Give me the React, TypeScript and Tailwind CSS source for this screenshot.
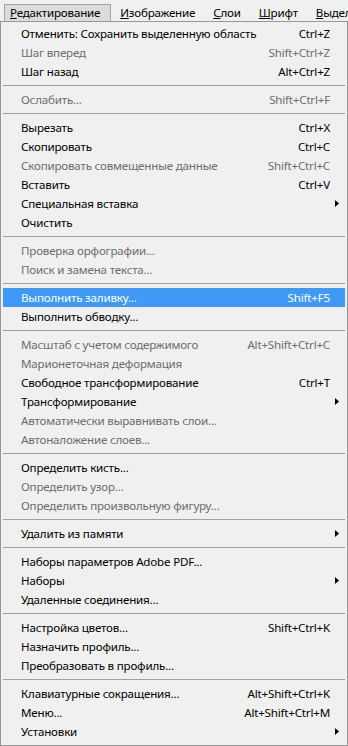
import React from "react"

type Item =
  | { sep: true }
  | {
      sep?: false
      label: string
      shortcut?: string
      disabled?: boolean
      submenu?: boolean
      active?: boolean
    }

const ITEMS: Item[] = [
  { label: "Отменить: Сохранить выделенную область", shortcut: "Ctrl+Z" },
  { label: "Шаг вперед", shortcut: "Shift+Ctrl+Z", disabled: true },
  { label: "Шаг назад", shortcut: "Alt+Ctrl+Z" },
  { sep: true },
  { label: "Ослабить...", shortcut: "Shift+Ctrl+F", disabled: true },
  { sep: true },
  { label: "Вырезать", shortcut: "Ctrl+X" },
  { label: "Скопировать", shortcut: "Ctrl+C" },
  { label: "Скопировать совмещенные данные", shortcut: "Shift+Ctrl+C", disabled: true },
  { label: "Вставить", shortcut: "Ctrl+V" },
  { label: "Специальная вставка", submenu: true },
  { label: "Очистить" },
  { sep: true },
  { label: "Проверка орфографии...", disabled: true },
  { label: "Поиск и замена текста...", disabled: true },
  { sep: true },
  { label: "Выполнить заливку...", shortcut: "Shift+F5", active: true },
  { label: "Выполнить обводку..." },
  { sep: true },
  { label: "Масштаб с учетом содержимого", shortcut: "Alt+Shift+Ctrl+C", disabled: true },
  { label: "Марионеточная деформация", disabled: true },
  { label: "Свободное трансформирование", shortcut: "Ctrl+T" },
  { label: "Трансформирование", submenu: true },
  { label: "Автоматически выравнивать слои...", disabled: true },
  { label: "Автоналожение слоев...", disabled: true },
  { sep: true },
  { label: "Определить кисть..." },
  { label: "Определить узор...", disabled: true },
  { label: "Определить произвольную фигуру...", disabled: true },
  { sep: true },
  { label: "Удалить из памяти", submenu: true },
  { sep: true },
  { label: "Наборы параметров Adobe PDF..." },
  { label: "Наборы", submenu: true },
  { label: "Удаленные соединения..." },
  { sep: true },
  { label: "Настройка цветов...", shortcut: "Shift+Ctrl+K" },
  { label: "Назначить профиль..." },
  { label: "Преобразовать в профиль..." },
  { sep: true },
  { label: "Клавиатурные сокращения...", shortcut: "Alt+Shift+Ctrl+K" },
  { label: "Меню...", shortcut: "Alt+Shift+Ctrl+M" },
  { label: "Установки", submenu: true },
]

const MENUBAR = ["Изображение", "Слои", "Шрифт", "Выделение"]

const Arrow: React.FC<{ light?: boolean }> = ({ light }) => (
  <svg width="4" height="7" viewBox="0 0 4 7" className="block">
    <path d="M0 0 L4 3.5 L0 7 Z" fill={light ? "#fff" : "#000"} />
  </svg>
)

export default function App() {
  return (
    <div
      className="w-[348px] h-[746px] overflow-hidden bg-[#f0f0f0] text-[11.6px] tracking-[-0.2px] leading-none text-black flex flex-col"
      style={{ fontFamily: '"Noto Sans", "Open Sans", sans-serif' }}
    >
      {/* menu bar */}
      <div className="h-[21px] shrink-0 flex items-end pl-[4px] whitespace-nowrap overflow-hidden">
        <div className="h-[17px] pl-[5px] pr-[10px] flex items-center bg-[#dcdcdc] border border-b-0 border-[#a4a4a4]">
          <span>
            <span className="underline">Р</span>едактирование
          </span>
        </div>
        {MENUBAR.map((m) => (
          <div key={m} className="h-[17px] px-[9px] flex items-center shrink-0">
            <span>
              <span className="underline">{m[0]}</span>
              {m.slice(1)}
            </span>
          </div>
        ))}
      </div>

      {/* dropdown */}
      <div className="flex-1 border border-[#979797] pt-[2px] px-[2px] flex flex-col">
        {ITEMS.map((it, i) =>
          it.sep ? (
            <div key={i} className="h-[9px] shrink-0 flex items-center">
              <div className="h-px w-full bg-[#a0a0a0]" />
            </div>
          ) : (
            <div
              key={i}
              className={
                "h-[19px] shrink-0 flex items-center pl-[18px] pr-[6px] whitespace-nowrap " +
                (it.active
                  ? "bg-[#3f99f7] text-white"
                  : it.disabled
                  ? "text-[#6d6d6d]"
                  : "text-black")
              }
            >
              <span className="flex-1">{it.label}</span>
              {it.shortcut && <span className="mr-[5px]">{it.shortcut}</span>}
              {it.submenu ? <Arrow light={it.active} /> : <span className="w-[4px]" />}
            </div>
          )
        )}
      </div>
    </div>
  )
}
